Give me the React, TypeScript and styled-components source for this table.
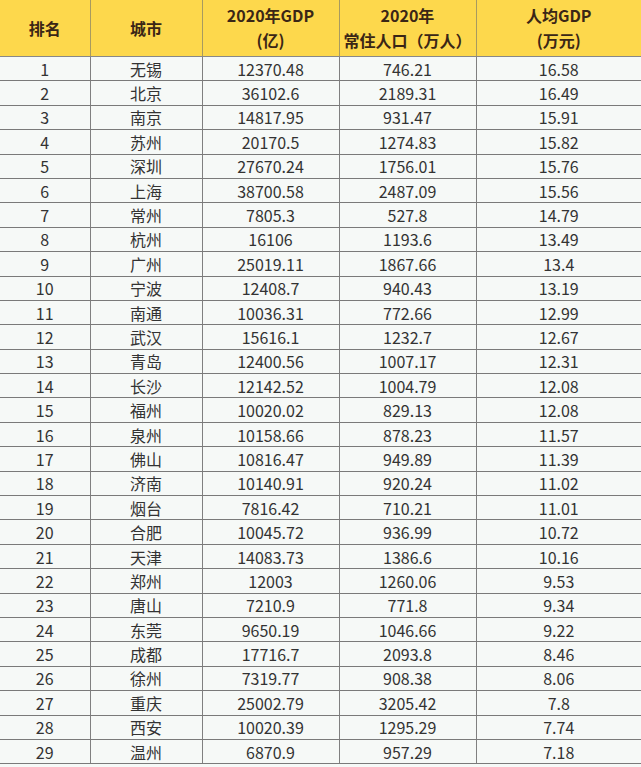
import { createGlobalStyle, styled } from 'styled-components';

const rows: [string, string, string, string][] = [
  ['无锡', '12370.48', '746.21', '16.58'],
  ['北京', '36102.6', '2189.31', '16.49'],
  ['南京', '14817.95', '931.47', '15.91'],
  ['苏州', '20170.5', '1274.83', '15.82'],
  ['深圳', '27670.24', '1756.01', '15.76'],
  ['上海', '38700.58', '2487.09', '15.56'],
  ['常州', '7805.3', '527.8', '14.79'],
  ['杭州', '16106', '1193.6', '13.49'],
  ['广州', '25019.11', '1867.66', '13.4'],
  ['宁波', '12408.7', '940.43', '13.19'],
  ['南通', '10036.31', '772.66', '12.99'],
  ['武汉', '15616.1', '1232.7', '12.67'],
  ['青岛', '12400.56', '1007.17', '12.31'],
  ['长沙', '12142.52', '1004.79', '12.08'],
  ['福州', '10020.02', '829.13', '12.08'],
  ['泉州', '10158.66', '878.23', '11.57'],
  ['佛山', '10816.47', '949.89', '11.39'],
  ['济南', '10140.91', '920.24', '11.02'],
  ['烟台', '7816.42', '710.21', '11.01'],
  ['合肥', '10045.72', '936.99', '10.72'],
  ['天津', '14083.73', '1386.6', '10.16'],
  ['郑州', '12003', '1260.06', '9.53'],
  ['唐山', '7210.9', '771.8', '9.34'],
  ['东莞', '9650.19', '1046.66', '9.22'],
  ['成都', '17716.7', '2093.8', '8.46'],
  ['徐州', '7319.77', '908.38', '8.06'],
  ['重庆', '25002.79', '3205.42', '7.8'],
  ['西安', '10020.39', '1295.29', '7.74'],
  ['温州', '6870.9', '957.29', '7.18'],
];

const GlobalStyle = createGlobalStyle`
  body {
    margin: 0;
    background: #f6f9f7;
    font-family: "Noto Sans CJK SC", "Noto Sans", sans-serif;
  }
`;

const App = () => {
  return (
    <>
      <GlobalStyle />
      <StTable>
        <colgroup>
          <col style={{ width: 90 }} />
          <col style={{ width: 112 }} />
          <col style={{ width: 137 }} />
          <col style={{ width: 137 }} />
          <col />
        </colgroup>
        <thead>
          <tr>
            <StHead>排名</StHead>
            <StHead>城市</StHead>
            <StHead>
              2020年GDP
              <br />
              (亿)
            </StHead>
            <StHead>
              2020年
              <br />
              常住人口（万人）
            </StHead>
            <StHead>
              人均GDP
              <br />
              (万元)
            </StHead>
          </tr>
        </thead>
        <tbody>
          {rows.map((r, i) => (
            <StRow key={r[0]}>
              <StCell>{i + 1}</StCell>
              {r.map((v) => (
                <StCell key={v}>{v}</StCell>
              ))}
            </StRow>
          ))}
        </tbody>
      </StTable>
    </>
  );
};

const StTable = styled.table`
  width: 641px;
  border-collapse: collapse;
  table-layout: fixed;
  background: #f6f9f7;
`;

const StHead = styled.th`
  height: 56px;
  padding: 0;
  background: #fdd84c;
  color: #3a2616;
  font-size: 16px;
  font-weight: 700;
  line-height: 25px;
  text-align: center;
  vertical-align: middle;
  border-left: 1px solid #a89a60;
  border-bottom: 1px solid #888;

  &:first-child {
    border-left: none;
  }
`;

const StRow = styled.tr`
  height: 24.4px;
`;

const StCell = styled.td`
  padding: 0;
  color: #333;
  font-size: 16px;
  line-height: 22px;
  text-align: center;
  border-left: 1px solid #808080;
  border-bottom: 1px solid #7a7a7a;
  white-space: nowrap;

  &:first-child {
    border-left: none;
  }
`;

export default App;
